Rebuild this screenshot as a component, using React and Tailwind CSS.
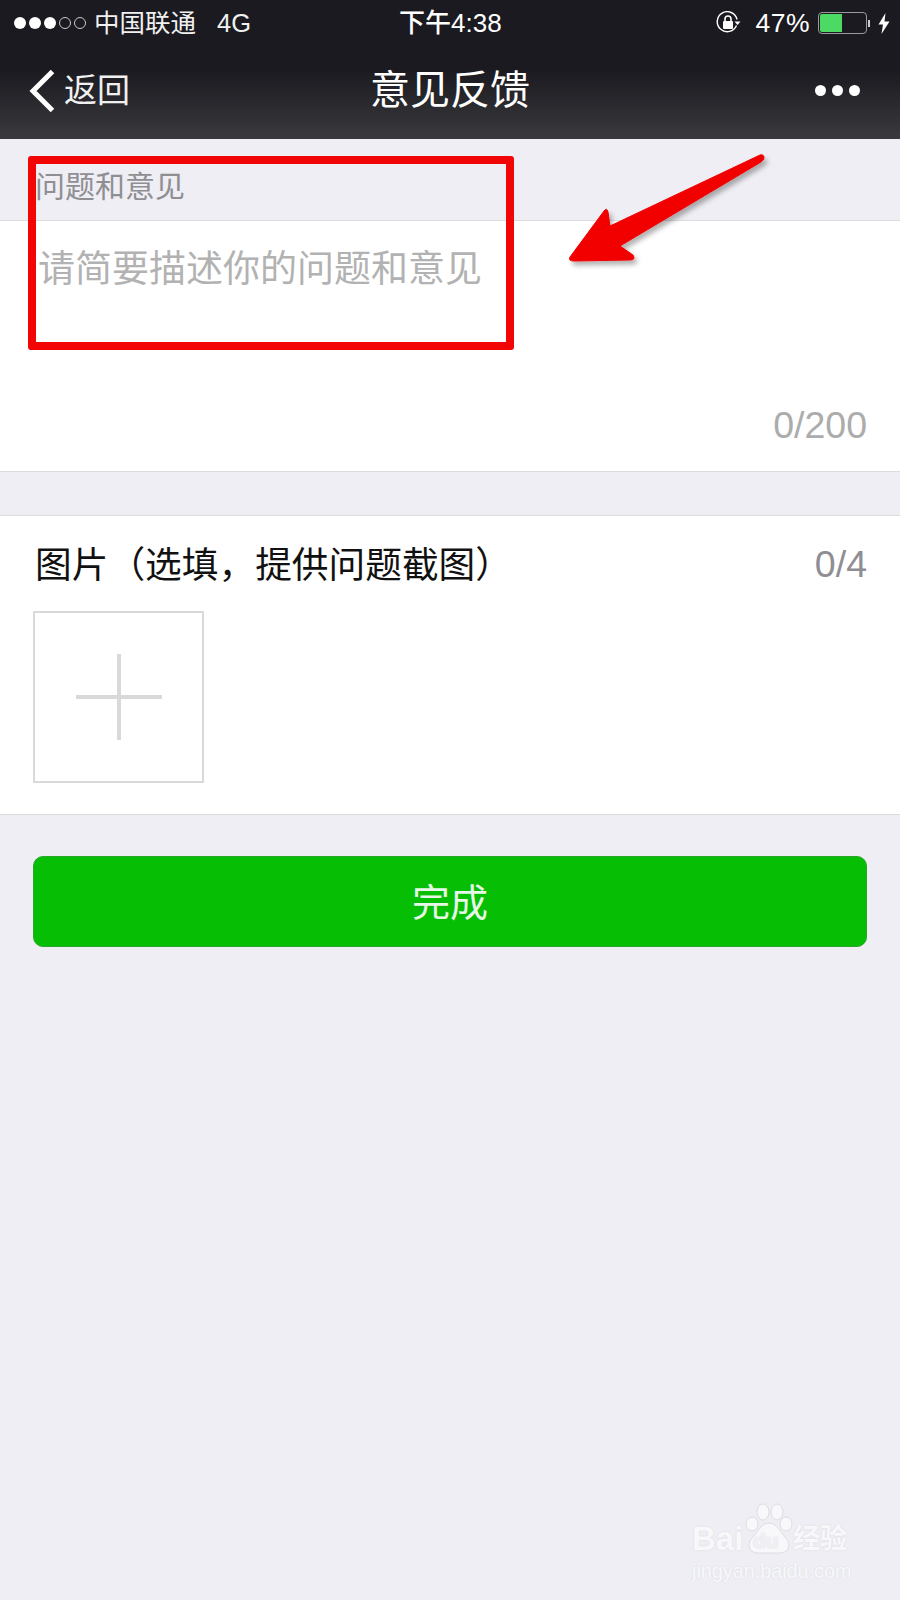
const FONT = "font-['Liberation_Sans','Noto_Sans_CJK_SC',sans-serif]";

function SignalDots() {
  return (
    <div className="flex items-center gap-[3px]">
      {[0, 1, 2].map((i) => (
        <span key={i} className="w-[12px] h-[12px] rounded-full bg-white" />
      ))}
      {[0, 1].map((i) => (
        <span key={i} className="w-[12px] h-[12px] rounded-full border border-[#c8c8c8]" />
      ))}
    </div>
  );
}

function RotationLock() {
  return (
    <svg width="26" height="24" viewBox="0 0 26 24" fill="none">
      <path d="M20.5 14.5A10 10 0 1 1 21 8.5" stroke="#fff" strokeWidth="1.4" fill="none" />
      <path d="M18.5 10.5h6l-3 3.5z" fill="#fff" />
      <rect x="7" y="10" width="10" height="8" rx="1" fill="#fff" />
      <path d="M9 10V8a3 3 0 0 1 6 0v2" stroke="#fff" strokeWidth="1.6" fill="none" />
    </svg>
  );
}

function Battery() {
  return (
    <div className="flex items-center gap-[1px]">
      <div className="w-[49px] h-[22px] rounded-[4px] border border-[#9a9a9a] p-[1px]">
        <div className="w-[22px] h-full rounded-l-[2px] bg-[#4cd964]" />
      </div>
      <span className="w-[2px] h-[7px] bg-[#cfcfcf]" />
    </div>
  );
}

function Bolt() {
  return (
    <svg width="12" height="21" viewBox="0 0 12 21">
      <path d="M7.5 0L0.5 11.5H5L3.5 21L11.5 8.5H6.5z" fill="#fff" />
    </svg>
  );
}

function BackChevron() {
  return (
    <svg width="28" height="46" viewBox="0 0 28 46" fill="none">
      <path d="M24.5 3.5L5 23L24.5 42.5" stroke="#fff" strokeWidth="5" />
    </svg>
  );
}

function Arrow() {
  return (
    <svg className="absolute left-[560px] top-[145px]" width="220" height="130" viewBox="0 0 220 130">
      <defs>
        <filter id="arrowShadow" x="-10%" y="-10%" width="125%" height="130%">
          <feDropShadow dx="3" dy="4" stdDeviation="2.5" floodColor="#000" floodOpacity="0.3" />
        </filter>
      </defs>
      <path
        d="M10 112L44 66Q47 62 48 67L50 81L200 10Q204 9 204 13Q204 15 201 17L60 101L73 110Q76 115 70 115L14 116Q8 116 10 112Z"
        fill="#f20505"
        stroke="#f20505"
        strokeWidth="1"
        strokeLinejoin="round"
        filter="url(#arrowShadow)"
      />
    </svg>
  );
}

function BaiduMark() {
  return (
    <div className="absolute left-[692px] top-[1503px] w-[165px] text-[#f8f8fb] [text-shadow:0_0_2px_#d8d8de]">
      <div className="relative h-[58px]">
        <span className="absolute left-0 top-[18px] font-['Liberation_Sans',sans-serif] font-bold text-[33px] leading-[36px]">Bai</span>
        <svg className="absolute left-[53px] top-0" width="48" height="52" viewBox="0 0 48 52">
          <g fill="#f8f8fb" stroke="#dcdce2" strokeWidth="1">
            <ellipse cx="18" cy="9" rx="6" ry="8" />
            <ellipse cx="32" cy="9" rx="6" ry="8" />
            <ellipse cx="7" cy="21" rx="6" ry="7" />
            <ellipse cx="41" cy="21" rx="6" ry="7" />
            <path d="M24 20C16 20 13 29 7 35C1 42 5 50 13 50H35C43 50 47 42 41 35C35 29 32 20 24 20Z" />
          </g>
        </svg>
        <span className="absolute left-[61px] top-[27px] font-['Liberation_Sans',sans-serif] font-bold text-[21px] leading-[22px] text-[#f0f0f5]">du</span>
        <span className="absolute left-[101px] top-[18px] font-bold text-[27px] leading-[36px] whitespace-nowrap">经验</span>
      </div>
      <div className="font-['Liberation_Sans',sans-serif] text-[19.8px] leading-[22px] mt-[-1px] whitespace-nowrap">jingyan.baidu.com</div>
    </div>
  );
}

export default function App() {
  return (
    <div className={`relative w-[900px] h-[1600px] overflow-hidden bg-[#eeeef4] ${FONT}`}>
      {/* Nav bar */}
      <div className="h-[139px] bg-gradient-to-b from-[#1a1a20] from-50% to-[#3a3a3e] text-white">
        <div className="h-[46px] pl-[14px] pr-[10px] flex items-center justify-between relative">
          <div className="flex items-center">
            <SignalDots />
            <span className="ml-[8px] text-[25.5px] leading-[30px] text-[#f0f0f0]">中国联通</span>
            <span className="ml-[21px] text-[25.5px] leading-[30px] text-[#f0f0f0]">4G</span>
          </div>
          <span className="absolute left-[399px] top-[8px] text-[26px] leading-[30px] font-medium whitespace-nowrap">下午4:38</span>
          <div className="flex items-center">
            <RotationLock />
            <span className="ml-[13px] text-[26.5px] leading-[30px] tracking-[0.5px]">47%</span>
            <div className="ml-[8px]"><Battery /></div>
            <div className="ml-[8px]"><Bolt /></div>
          </div>
        </div>
        <div className="h-[93px] relative flex items-center justify-between pl-[28px] pr-[40px] pb-[4px]">
          <div className="flex items-center gap-[8px]">
            <BackChevron />
            <span className="text-[33px] leading-[40px] text-[#f0f0f0]">返回</span>
          </div>
          <span className="absolute left-0 right-0 top-[21px] text-center text-[40px] leading-[46px] font-normal pointer-events-none">意见反馈</span>
          <div className="flex items-center gap-[6px]">
            <span className="w-[11px] h-[11px] rounded-full bg-white" />
            <span className="w-[11px] h-[11px] rounded-full bg-white" />
            <span className="w-[11px] h-[11px] rounded-full bg-white" />
          </div>
        </div>
      </div>

      {/* Feedback text */}
      <div className="h-[81px] px-[35px] pt-[28px] text-[30px] leading-[40px] text-[#8e8e93]">问题和意见</div>
      <div className="h-[252px] bg-white border-y border-[#dcdcdc] flex flex-col justify-between pl-[38px] pr-[33px]">
        <div className="pt-[24px] text-[37px] leading-[50px] text-[#b2b2b2]">请简要描述你的问题和意见</div>
        <div className="pb-[24px] text-right text-[37.5px] leading-[44px] text-[#acacac]">0/200</div>
      </div>

      {/* Images */}
      <div className="mt-[43px] h-[300px] bg-white border-y border-[#dcdcdc] px-[33px] pt-[24px]">
        <div className="flex items-center justify-between">
          <span className="pl-[2px] pt-[4px] text-[36.7px] leading-[44px] text-[#111]">图片（选填，提供问题截图）</span>
          <span className="text-[37.5px] leading-[44px] text-[#8e8e93]">0/4</span>
        </div>
        <div className="mt-[23px] w-[171px] h-[172px] border-2 border-[#d9d9d9] flex items-center justify-center relative">
          <span className="w-[86px] h-[4px] bg-[#d9d9d9]" />
          <span className="absolute w-[4px] h-[86px] bg-[#d9d9d9]" />
        </div>
      </div>

      {/* Submit */}
      <div className="mt-[41px] mx-[33px] h-[91px] pt-[3px] rounded-[10px] bg-[#06bf04] border border-[#2ba52a] flex items-center justify-center text-[38px] text-[#e8f8e8]">
        完成
      </div>

      {/* Annotations */}
      <div className="absolute left-[28px] top-[156px] w-[486px] h-[194px] border-[8px] border-[#f20505] rounded-[3px]" />
      <Arrow />
      <BaiduMark />
    </div>
  );
}
